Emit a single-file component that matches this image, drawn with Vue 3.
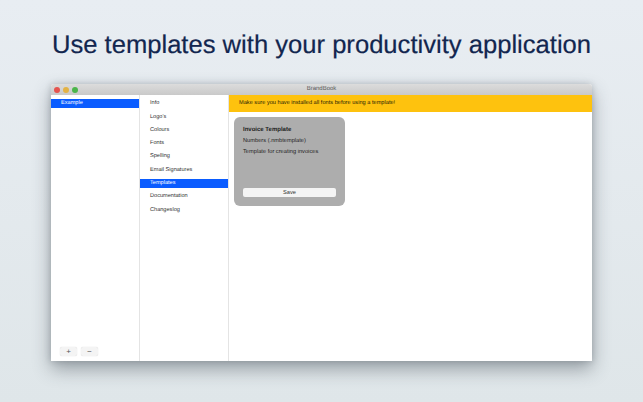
<script setup>
const projects = ['Example']
const sections = ['Info', "Logo's", 'Colours', 'Fonts', 'Spelling', 'Email Signatures', 'Templates', 'Documentation', 'Changeslog']
</script>

<template>
  <main class="page">
    <h1 class="headline">Use templates with your productivity application</h1>
    <section class="window">
      <header class="titlebar">
        <div class="lights">
          <span class="light red"></span>
          <span class="light yellow"></span>
          <span class="light green"></span>
        </div>
        <span class="title">BrandBook</span>
      </header>
      <div class="body">
        <aside class="projects">
          <ul class="list">
            <li v-for="p in projects" :key="p" class="row project selected">{{ p }}</li>
          </ul>
          <div class="tools">
            <button class="tool">+</button>
            <button class="tool">−</button>
          </div>
        </aside>
        <nav class="sections">
          <ul class="list">
            <li v-for="s in sections" :key="s" class="row section" :class="{ selected: s === 'Templates' }">{{ s }}</li>
          </ul>
        </nav>
        <div class="content">
          <div class="banner">Make sure you have installed all fonts before using a template!</div>
          <article class="card">
            <h2 class="card-title">Invoice Template</h2>
            <p class="card-line">Numbers (.nmbtemplate)</p>
            <p class="card-line">Template for creating invoices</p>
            <button class="save">Save</button>
          </article>
        </div>
      </div>
    </section>
  </main>
</template>

<style>
html, body { margin: 0; padding: 0; }
</style>

<style scoped>
.page {
  width: 643px;
  height: 402px;
  overflow: hidden;
  box-sizing: border-box;
  display: flex;
  flex-direction: column;
  align-items: center;
  background: linear-gradient(180deg, #e8edf2 0%, #dfe6e9 100%);
  font-family: "Liberation Sans", Arial, sans-serif;
  text-rendering: geometricPrecision;
}
.headline {
  margin: 29px 0 0;
  height: 33px;
  font-size: 25.6px;
  line-height: 33px;
  font-weight: 400;
  color: #12264f;
  white-space: nowrap;
  -webkit-text-stroke: 0.2px #12264f;
}
.window {
  margin-top: 22px;
  width: 541px;
  height: 277px;
  display: flex;
  flex-direction: column;
  border-radius: 3px 3px 0 0;
  overflow: hidden;
  background: #fff;
  box-shadow: 0 8px 18px rgba(50, 60, 70, 0.42), 0 0 6px rgba(50, 60, 70, 0.22);
}
.titlebar {
  height: 11px;
  flex: none;
  display: flex;
  align-items: center;
  justify-content: center;
  position: relative;
  background: linear-gradient(180deg, #dcdcdc, #c9c9c9);
}
.lights {
  position: absolute;
  left: 3px;
  top: 3px;
  display: flex;
  gap: 3px;
}
.light {
  width: 6px;
  height: 6px;
  border-radius: 50%;
}
.red { background: #e5534e; }
.yellow { background: #e3b244; }
.green { background: #4bb54a; }
.title {
  font-size: 6px;
  line-height: 11px;
  color: #5a5a5a;
}
.body {
  flex: 1;
  display: flex;
  min-height: 0;
}
.projects {
  width: 89px;
  flex: none;
  box-sizing: border-box;
  border-right: 1px solid #e4e4e4;
  display: flex;
  flex-direction: column;
  justify-content: space-between;
}
.sections {
  width: 89px;
  flex: none;
  box-sizing: border-box;
  border-right: 1px solid #e4e4e4;
}
.list {
  list-style: none;
  margin: 0;
  padding: 0;
}
.row {
  font-size: 5.6px;
  color: #333;
  white-space: nowrap;
}
.project {
  margin-top: 4px;
  height: 9px;
  line-height: 9px;
  padding-left: 10px;
}
.section {
  height: 9px;
  line-height: 9px;
  padding-left: 10px;
  margin-top: 4.3px;
}
.selected {
  background: #0a5cff;
  color: #fff;
}
.tools {
  display: flex;
  gap: 4px;
  padding: 0 0 5px 9px;
}
.tool {
  width: 17px;
  height: 9px;
  padding: 0;
  border: none;
  border-radius: 2px;
  background: #f4f4f4;
  box-shadow: 0 0 1px rgba(0, 0, 0, 0.2);
  font-family: inherit;
  font-size: 8px;
  line-height: 9px;
  color: #555;
}
.content {
  flex: 1;
  min-width: 0;
}
.banner {
  height: 17px;
  line-height: 17px;
  padding-left: 10px;
  font-size: 5.65px;
  color: #2b2206;
  background: #fec20e;
  white-space: nowrap;
}
.card {
  margin: 5px 0 0 5px;
  width: 111px;
  height: 89px;
  box-sizing: border-box;
  padding: 9px 9px 0;
  border-radius: 6px;
  background: #adadad;
  display: flex;
  flex-direction: column;
  color: #1f1f1f;
}
.card-title {
  margin: 0;
  font-size: 6px;
  line-height: 8px;
  font-weight: 700;
}
.card-line {
  margin: 3px 0 0;
  font-size: 5.7px;
  line-height: 8px;
}
.card-line + .card-line {
  margin-top: 3px;
}
.save {
  margin-top: auto;
  margin-bottom: 9px;
  height: 9px;
  padding: 0;
  border: none;
  border-radius: 2px;
  background: #f4f4f4;
  font-family: inherit;
  font-size: 5.7px;
  line-height: 9px;
  color: #333;
}
</style>
